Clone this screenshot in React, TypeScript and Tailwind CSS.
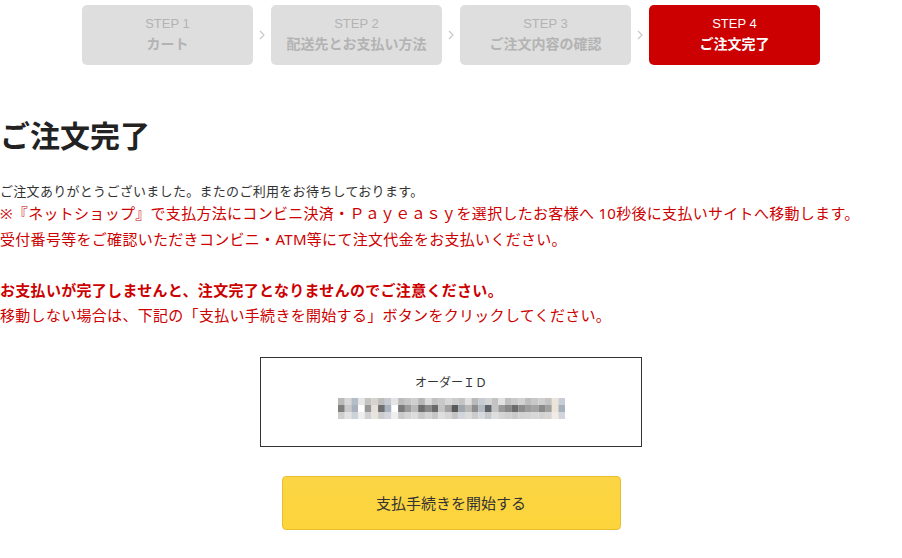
import React from "react";

const steps = [
  { no: 1, label: "カート" },
  { no: 2, label: "配送先とお支払い方法" },
  { no: 3, label: "ご注文内容の確認" },
  { no: 4, label: "ご注文完了" },
];

// mosaic that hides the order id (3 rows x 34 blurred cells)
const mosaic: string[][] = [
  ["#b9b9b9", "#d8d8d8", "#b4bcc6", "#e6e6e6", "#c4c4c4", "#d6d2cc", "#bdbdbd", "#c8ccd2", "#e4e4e4", "#bcbcbc", "#c6c6c6", "#cfcfcf", "#b6b6b6", "#dadada", "#c2c2c2", "#c8c8c8", "#d6d6d6", "#cccccc", "#c4c4c4", "#e0e0e0", "#bababa", "#c6ccd4", "#d4d4d4", "#c2c2c2", "#e2e2e2", "#c0c0c0", "#cacaca", "#d2d2d2", "#bebebe", "#c8c8c8", "#d0d0d0", "#c4c4c4", "#ece4d8", "#c8ccd4"],
  ["#7f7f7f", "#c9c9c9", "#a7b0bb", "#ffffff", "#979797", "#e6e0d8", "#6f6f6f", "#a9b2bd", "#ffffff", "#7a7a7a", "#9b9b9b", "#b9b9b9", "#6d6d6d", "#8a8a8a", "#6a6a6a", "#c4c4c4", "#a1a1a1", "#5a5a5a", "#a0a6ae", "#b8b8b8", "#8e8e8e", "#b4bac2", "#5e636a", "#c4c4c4", "#9a9a9a", "#888888", "#6c6c6c", "#8c8c8c", "#9c9c9c", "#a4a4a4", "#8a8a8a", "#a0a0a0", "#ece4d6", "#a8b0bc"],
  ["#cfcfcf", "#e2e2e2", "#ccd2d8", "#eeeeee", "#d2d2d2", "#e8e4de", "#cccccc", "#d2d6dc", "#eeeeee", "#cacaca", "#d4d4d4", "#dcdcdc", "#c8c8c8", "#d4d4d4", "#c6c6c6", "#dedede", "#d6d6d6", "#c4c4c4", "#d2d6da", "#dcdcdc", "#cccccc", "#d6dade", "#c6c8cc", "#dedede", "#d4d4d4", "#d0d0d0", "#cacaca", "#d2d2d2", "#d4d4d4", "#d8d8d8", "#d2d2d2", "#d6d6d6", "#f0ebe4", "#d2d6dc"],
];

const Chevron = () => (
  <svg width="6" height="10" viewBox="0 0 6 10" className="shrink-0">
    <path d="M1 1l4 4-4 4" fill="none" stroke="#c9c9c9" strokeWidth="1.2" />
  </svg>
);

const OrderMosaic = () => (
  <svg width="227" height="21" viewBox="0 0 227 21">
    {mosaic.map((row, r) =>
      row.map((c, i) => (
        <rect key={r + "-" + i} x={i * 6.68} y={r * 7} width="6.8" height="7" fill={c} />
      ))
    )}
  </svg>
);

export default function App() {
  return (
    <div
      className="w-[902px] h-[558px] overflow-hidden bg-white text-[#333]"
      style={{ fontFamily: '"Noto Sans", "Noto Sans CJK JP", sans-serif' }}
    >
      <div className="flex items-center justify-center gap-[6px] pt-[5px]">
        {steps.map((s, i) => (
          <React.Fragment key={s.no}>
            {i > 0 && <Chevron />}
            <div
              className={
                "w-[171px] h-[60px] rounded-[5px] flex flex-col items-center justify-center " +
                (s.no === 4 ? "bg-[#cc0000] text-white" : "bg-[#dedede] text-[#b3b3b3]")
              }
            >
              <div className="text-[13px] leading-[18px] font-['Liberation_Sans',sans-serif]">STEP {s.no}</div>
              <div className="text-[14px] leading-[22px] font-bold">{s.label}</div>
            </div>
          </React.Fragment>
        ))}
      </div>

      <h1 className="mt-[53px] text-[30px] leading-[36px] font-bold text-[#222]">ご注文完了</h1>

      <div className="tracking-[0.3px]">
        <p className="mt-[28px] text-[13px] leading-[18px] text-[#333]">
          ご注文ありがとうございました。またのご利用をお待ちしております。
        </p>
        <p className="text-[15px] leading-[26px] text-[#cc0000]">
          ※『ネットショップ』で支払方法にコンビニ決済・Ｐａｙｅａｓｙを選択したお客様へ 10秒後に支払いサイトへ移動します。
          <br />
          受付番号等をご確認いただきコンビニ・ATM等にて注文代金をお支払いください。
        </p>

        <p className="mt-[26px] text-[15px] leading-[25px] text-[#cc0000]">
          <span className="font-bold">お支払いが完了しませんと、注文完了となりませんのでご注意ください。</span>
          <br />
          移動しない場合は、下記の「支払い手続きを開始する」ボタンをクリックしてください。
        </p>
      </div>

      <div className="mt-[29px] mx-auto w-[382px] h-[90px] border border-[#333] flex flex-col items-center pt-[16px]">
        <div className="text-[12px] leading-[18px] text-[#333]">オーダーＩＤ</div>
        <div className="mt-[6px]">
          <OrderMosaic />
        </div>
      </div>

      <div className="mt-[29px] flex justify-center">
        <button className="w-[339px] h-[54px] rounded-[4px] border border-[#e9bd30] bg-gradient-to-b from-[#fbd545] to-[#fdd43a] text-[15px] text-[#333]">
          支払手続きを開始する
        </button>
      </div>
    </div>
  );
}
